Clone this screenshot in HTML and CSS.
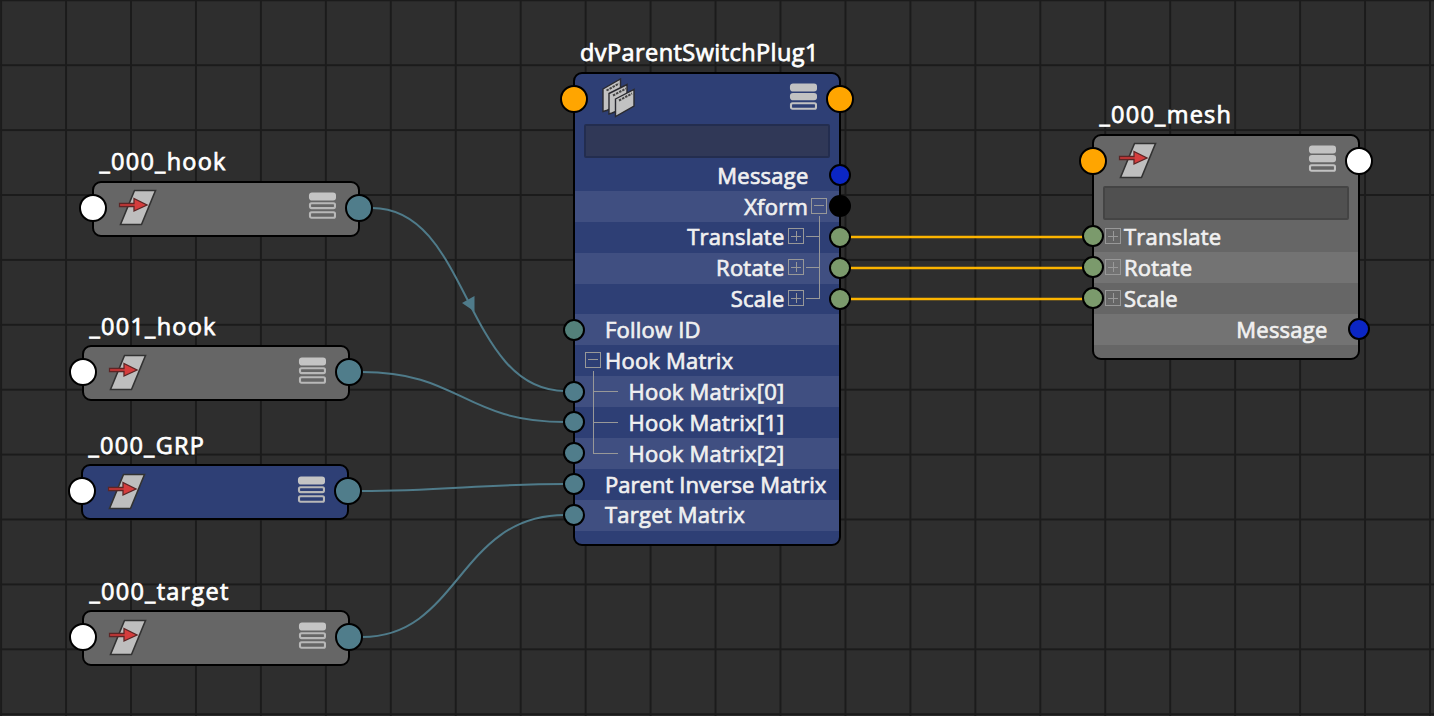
FILE: index.html
```
<!DOCTYPE html>
<html lang="en">
<head>
<meta charset="utf-8">
<title>Node Editor</title>
<link rel="stylesheet" href="styles.css">
</head>
<body>
<svg width="0" height="0" class="defs">
  <defs>
    <filter id="soft" x="-10%" y="-10%" width="120%" height="120%"><feGaussianBlur stdDeviation="0.6"/></filter>
    <pattern id="grid" x="0.1" y="-0.7" width="64.95" height="64.9" patternUnits="userSpaceOnUse"><path d="M1 0V65M0 1H65" stroke="#1b1b1b" stroke-width="2" fill="none"/></pattern>
    <symbol id="transform" viewBox="0 0 42 40">
      <g filter="url(#soft)">
        <path d="M17.500 2.500H38.500L24.500 36.500H3.500Z" fill="#bebebe" stroke="#333" stroke-width="1.600"/>
        <path d="M2.500 15.500H17V10.500L30 17L17 23V18.500H2.500Z" fill="#d63d3d" stroke="#5c2626" stroke-width="1.300"/>
      </g>
    </symbol>
    <symbol id="stack" viewBox="0 0 40 42">
      <g filter="url(#soft)">
        <g fill="#c2c2c2" stroke="#2b2b30" stroke-width="1.400">
          <path d="M5 11L22.500 1V25L8.500 32.500 5 33.500Z"/>
          <path d="M11 15.500L29 6.500V29L14 35 11 36Z"/>
          <path d="M17.500 21L36 11.500V28L17.500 38.500Z"/>
        </g>
        <path d="M8.500 12.500L21 5.500M15 17.500L28 10.500M21 22.500L34 15.500" fill="none" stroke="#444" stroke-width="2" stroke-dasharray="2.500 1"/>
      </g>
    </symbol>
    <symbol id="mode-simple" viewBox="0 0 28 28">
      <g filter="url(#soft)" stroke="#b8b8b8" stroke-width="2.100" fill="none">
        <rect x="2" y="1.500" width="25" height="6" rx="2" fill="#c4c4c4" stroke="#c4c4c4"/>
        <rect x="2" y="11.300" width="25" height="4.800" rx="1.500"/>
        <rect x="2" y="20.300" width="25" height="5.500" rx="1.500"/>
      </g>
    </symbol>
    <symbol id="mode-connected" viewBox="0 0 28 28">
      <g filter="url(#soft)" stroke="#c2c2c2" stroke-width="2.100" fill="none">
        <rect x="2" y="1.500" width="25" height="6" rx="2" fill="#c2c2c2"/>
        <rect x="2" y="11.100" width="25" height="5.200" rx="2" fill="#c2c2c2"/>
        <rect x="2" y="20.300" width="25" height="5.500" rx="1.500"/>
      </g>
    </symbol>
  </defs>
</svg>
<main class="canvas">
  <svg class="wires" width="1434" height="716">
    <rect width="1434" height="716" fill="url(#grid)"/>
    <g class="wire">
      <path d="M372 208C470 208 464 391 565 391"/>
      <path d="M362 372C460 372 464 422 565 422"/>
      <path d="M361 491C440 491 486 484 565 484"/>
      <path d="M362 637C460 637 458 515 565 515"/>
    </g>
    <path class="arrow" d="M462 303L474.500 296V311.500Z"/>
    <path class="wire-hot" d="M850 237H1084M850 268H1084M850 299H1084"/>
  </svg>

  <section class="node small hook0">
    <h2>_000_hook</h2>
    <div class="body"><i class="port big in white"></i><svg class="type"><use href="#transform"/></svg><svg class="mode"><use href="#mode-simple"/></svg><i class="port big out teal"></i></div>
  </section>
  <section class="node small low hook1">
    <h2>_001_hook</h2>
    <div class="body"><i class="port big in white"></i><svg class="type"><use href="#transform"/></svg><svg class="mode"><use href="#mode-simple"/></svg><i class="port big out teal"></i></div>
  </section>
  <section class="node small low grp">
    <h2>_000_GRP</h2>
    <div class="body blue"><i class="port big in white"></i><svg class="type"><use href="#transform"/></svg><svg class="mode"><use href="#mode-simple"/></svg><i class="port big out teal"></i></div>
  </section>
  <section class="node small low target">
    <h2>_000_target</h2>
    <div class="body"><i class="port big in white"></i><svg class="type"><use href="#transform"/></svg><svg class="mode"><use href="#mode-simple"/></svg><i class="port big out teal"></i></div>
  </section>

  <section class="node plug">
    <h2>dvParentSwitchPlug1</h2>
    <div class="body blue">
      <header><i class="port big in orange"></i><svg class="type stack"><use href="#stack"/></svg><svg class="mode"><use href="#mode-connected"/></svg><i class="port big out orange"></i></header>
      <div class="field"></div>
      <div class="row right"><span>Message</span><i class="port out royal"></i></div>
      <div class="row right tree0 alt"><span>Xform</span><b class="box minus"></b><i class="port out black"></i></div>
      <div class="row right tree1"><span>Translate</span><b class="box"></b><i class="port out green"></i></div>
      <div class="row right tree1 alt"><span>Rotate</span><b class="box"></b><i class="port out green"></i></div>
      <div class="row right tree1"><span>Scale</span><b class="box"></b><i class="port out green"></i></div>
      <div class="row alt"><i class="port in sea"></i><span>Follow ID</span></div>
      <div class="row parent"><b class="box minus"></b><span>Hook Matrix</span></div>
      <div class="row child alt"><i class="port in teal"></i><span>Hook Matrix[0]</span></div>
      <div class="row child"><i class="port in teal"></i><span>Hook Matrix[1]</span></div>
      <div class="row child alt"><i class="port in teal"></i><span>Hook Matrix[2]</span></div>
      <div class="row long"><i class="port in teal"></i><span>Parent Inverse Matrix</span></div>
      <div class="row alt"><i class="port in teal"></i><span>Target Matrix</span></div>
      <svg class="branches" width="266" height="470"><path d="M244.500 142V224.500M231 162.500H244.500M231 193.500H244.500M231 224.500H245M18.500 297V379.500M18.500 317.500H43M18.500 348.500H43M18 379.500H43"/></svg>
    </div>
  </section>

  <section class="node mesh">
    <h2>_000_mesh</h2>
    <div class="body">
      <header><i class="port big in orange"></i><svg class="type"><use href="#transform"/></svg><svg class="mode"><use href="#mode-connected"/></svg><i class="port big out white"></i></header>
      <div class="field"></div>
      <div class="row plus"><i class="port in green"></i><b class="box"></b><span>Translate</span></div>
      <div class="row plus alt"><i class="port in green"></i><b class="box"></b><span>Rotate</span></div>
      <div class="row plus"><i class="port in green"></i><b class="box"></b><span>Scale</span></div>
      <div class="row right alt"><span>Message</span><i class="port out royal"></i></div>
    </div>
  </section>
</main>
</body>
</html>
```
FILE: styles.css
```
* { box-sizing: border-box; }
body { margin: 0; background: #2e2e2e; font-family: "Open Sans", "Noto Sans", sans-serif; font-kerning: none; }
.defs { position: absolute; }
.canvas { position: relative; width: 1434px; height: 716px; overflow: hidden; }
.wires { position: absolute; inset: 0; }
.wire path { fill: none; stroke: #4f7b8a; stroke-width: 2; }
.arrow { fill: #4f7b8a; }
.wire-hot { stroke: #fcb400; stroke-width: 2.300; fill: none; }

/* Nodes sit freely on the canvas */
.node { position: absolute; width: 268px; }
.hook0 { left: 92px; top: 144px; }
.hook1 { left: 82px; top: 308px; }
.grp { left: 81px; top: 427px; }
.target { left: 82px; top: 573px; }
.plug { left: 573px; top: 35px; }
.mesh { left: 1092px; top: 97px; }

.node h2 { margin: 0 0 3px 7.500px; height: 34px; line-height: 34px; font-size: 23.500px; font-weight: 500; letter-spacing: 1.250px; color: #fff; white-space: nowrap; -webkit-text-stroke: 0.750px #fff; }
.low h2 { line-height: 36px; }
.plug h2 { margin-left: 7px; letter-spacing: 0.430px; }
.body { position: relative; border: 2px solid #000; border-radius: 9px; background: #666; --alt: #737373; }
.blue { background: #2e3f75; --alt: #404f81; }
.small .body { height: 56px; }
.small .body, header { display: flex; justify-content: space-between; align-items: flex-start; padding: 5px 22px 0 23px; }
.low .body { padding-top: 5.500px; }
header { position: relative; height: 50px; }
.type { width: 42px; height: 40px; }
.mode { width: 28px; height: 28px; margin-top: 4px; }
.type.stack { width: 40px; height: 42px; margin-top: -1px; }

.field { height: 34px; margin: 0 9px 2px; background: #505050; border: 2px solid #444; border-radius: 2px; }
.mesh .field { margin-bottom: 1px; }
.blue .field { background: #303857; border-color: #232d4f; }

.row { position: relative; height: 30.900px; display: flex; align-items: center; padding-left: 30px; color: #f0f0f0; font-size: 22px; font-weight: 500; line-height: 30px; letter-spacing: 0.220px; white-space: nowrap; -webkit-text-stroke: 0.700px #f0f0f0; }
.plug .row { padding-bottom: 1.600px; }
.long { letter-spacing: 0.050px; }
.alt { background: var(--alt); }
.right { justify-content: flex-end; padding-right: 30.500px; }
.tree0 { padding-right: 12px; gap: 3px; }
.tree1 { padding-right: 35px; gap: 3.500px; }
.parent { padding-left: 10px; gap: 4px; }
.child { padding-left: 53.500px; }
.plus { padding-left: 11px; gap: 3px; }
.plug .body { height: 474px; }
.mesh .body { height: 226px; }

/* Expand and collapse boxes */
.box { position: relative; width: 16px; height: 16px; border: 1px solid #989898; flex: none; background: linear-gradient(#989898, #989898) center / 10px 1px no-repeat, linear-gradient(#989898, #989898) center / 1px 10px no-repeat; }
.box.minus { background: linear-gradient(#989898, #989898) center / 10px 1px no-repeat; }
.branches { position: absolute; left: 0; top: 0; fill: none; stroke: #989898; stroke-width: 1; }

/* Connection ports overlap the node edge */
.port { position: absolute; top: 4.300px; width: 22px; height: 22px; border: 2px solid #000; border-radius: 50%; }
.port.in { left: -12px; }
.port.out { right: -12px; }
.port.big { top: 11px; width: 28px; height: 28px; }
.port.big.in { left: -15px; }
.port.big.out { right: -15px; }
.white { background: #fff; }
.teal { background: #507d8b; }
.orange { background: #ffa500; }
.royal { background: #0b26c4; }
.black { background: #000; }
.green { background: #7b9a6c; }
.sea { background: #53807a; }
```
